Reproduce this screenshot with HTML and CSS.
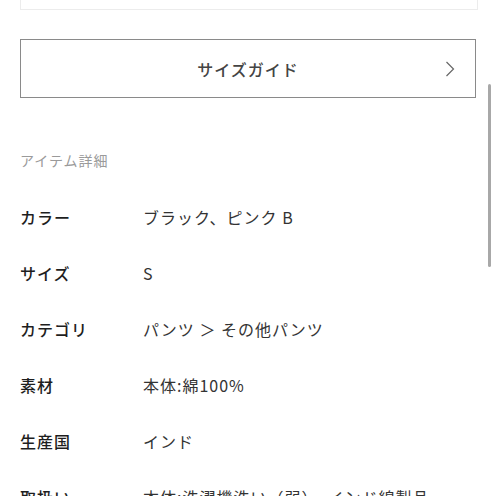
FILE: index.html
```html
<!DOCTYPE html>
<html lang="ja">
<head>
<meta charset="utf-8">
<link rel="stylesheet" href="styles.css">
</head>
<body>
<div class="page">
  <div class="top-box"></div>
  <div class="guide-btn">
    <span class="guide-label">サイズガイド</span>
    <svg class="chev" width="10" height="16" viewBox="0 0 10 16"><polyline points="1.5,1 8.5,8 1.5,15" fill="none" stroke="#666" stroke-width="1.2"/></svg>
  </div>
  <div class="section-title">アイテム詳細</div>
  <div class="details">
    <div class="row"><div class="k">カラー</div><div class="v">ブラック、ピンク B</div></div>
    <div class="row"><div class="k">サイズ</div><div class="v">S</div></div>
    <div class="row"><div class="k">カテゴリ</div><div class="v">パンツ ＞ その他パンツ</div></div>
    <div class="row"><div class="k">素材</div><div class="v">本体:綿100%</div></div>
    <div class="row"><div class="k">生産国</div><div class="v">インド</div></div>
    <div class="row"><div class="k">取扱い</div><div class="v">本体:洗濯機洗い（弱）、インド綿製品</div></div>
  </div>
</div>
<div class="scrollbar"></div>
</body>
</html>
```
FILE: styles.css
```css
html, body {
  margin: 0;
  padding: 0;
  background: #fff;
  overflow: hidden;
}
body {
  width: 496px;
  height: 496px;
  font-family: "Noto Sans CJK JP", "Noto Sans", sans-serif;
  color: #222;
}
.page {
  padding: 0 20px 0 20px;
}
.top-box {
  height: 9px;
  margin-right: -2px;
  border: 1px solid #ececec;
  border-top: none;
}
.guide-btn {
  margin-top: 29px;
  height: 57px;
  border: 1px solid #8a8a8a;
  display: flex;
  align-items: center;
  justify-content: center;
  position: relative;
}
.guide-label {
  font-size: 16px;
  font-weight: 500;
  letter-spacing: 1px;
  color: #444;
}
.chev {
  position: absolute;
  right: 20px;
  top: 21px;
}
.section-title {
  margin-top: 50px;
  font-size: 14px;
  letter-spacing: 1px;
  color: #9a9a9a;
  line-height: 24px;
}
.details {
  margin-top: 33px;
}
.row {
  display: flex;
  height: 56px;
  align-items: flex-start;
  font-size: 16px;
  line-height: 24px;
  letter-spacing: 1px;
}
.k {
  width: 123px;
  font-weight: 500;
  color: #1e1e1e;
}
.v {
  color: #333;
}
.scrollbar {
  position: absolute;
  left: 488px;
  top: 84px;
  width: 3px;
  height: 183px;
  border-radius: 2px;
  background: #a8a8a8;
}
```
